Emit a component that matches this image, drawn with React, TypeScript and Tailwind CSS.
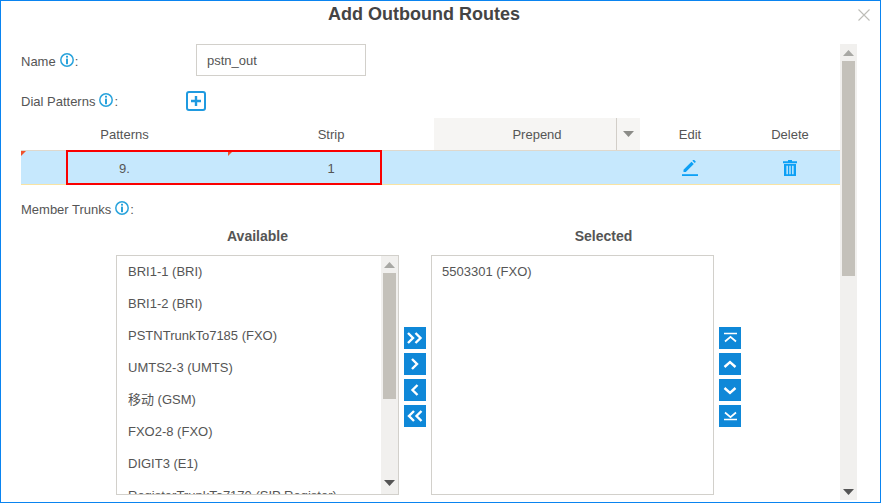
const availableTrunks = [
  'BRI1-1 (BRI)',
  'BRI1-2 (BRI)',
  'PSTNTrunkTo7185 (FXO)',
  'UMTS2-3 (UMTS)',
  '移动 (GSM)',
  'FXO2-8 (FXO)',
  'DIGIT3 (E1)',
  'RegisterTrunkTo7170 (SIP Register)',
];

const InfoIcon = () => (
  <svg width="14" height="14" viewBox="0 0 14 14" className="shrink-0">
    <circle cx="7" cy="7" r="6.2" fill="none" stroke="#29a3dc" strokeWidth="1.5" />
    <rect x="6" y="2.800" width="2" height="1.800" fill="#29a3dc" />
    <rect x="6" y="5.600" width="2" height="5.600" fill="#29a3dc" />
  </svg>
);

const Label = ({ text, className }: { text: string; className: string }) => (
  <div className={`flex items-center pt-[2px] ${className}`}>
    <span>{text}</span>
    <span className="mb-[4px] ml-[4px]">
      <InfoIcon />
    </span>
    <span className="ml-[1px]">:</span>
  </div>
);

const ArrowButton = ({ d, thin }: { d: string; thin?: boolean }) => (
  <button className="flex h-[22px] w-[22px] items-center justify-center bg-[#0f88d8]">
    <svg width="22" height="22" viewBox="0 0 22 22" fill="none" stroke="#fff" strokeWidth={thin ? 1.7 : 2.4}>
      <path d={d} />
    </svg>
  </button>
);

const Triangle = ({ className }: { className: string }) => (
  <div
    className={`absolute top-0 h-0 w-0 border-t-[5px] border-r-[5px] border-t-[#f0522b] border-r-transparent ${className}`}
  />
);

const ScrollUp = ({ color }: { color: string }) => (
  <svg width="11" height="6" viewBox="0 0 11 6">
    <path d="M5.500 0 11 6H0z" fill={color} />
  </svg>
);

const ScrollDown = () => (
  <svg width="11" height="6" viewBox="0 0 11 6">
    <path d="M0 0h11L5.500 6z" fill="#555" />
  </svg>
);

export default function App() {
  return (
    <div className="relative flex h-[503px] w-[881px] flex-col overflow-hidden border border-[#0a84f0] bg-white font-['Liberation_Sans','Noto_Sans_CJK_SC',sans-serif] text-[13px] text-[#555]">
      <div className="flex h-[43px] shrink-0 justify-center pt-[3px] pr-[33px]">
        <h1 className="text-[18px] leading-[20px] font-bold text-[#444]">Add Outbound Routes</h1>
      </div>
      <button className="absolute top-[8px] right-[10px]">
        <svg width="12" height="12" viewBox="0 0 12 12" stroke="#bdbdb8" strokeWidth="1.100" fill="none">
          <path d="M.5.5l11 11M11.5.5l-11 11" />
        </svg>
      </button>

      <div className="flex min-h-0 flex-1 pb-[1px]">
        <div className="relative ml-[20px] w-[819px] shrink-0 overflow-hidden">
          <div className="flex h-[32px] items-center">
            <Label text="Name" className="mt-[2px] w-[175px]" />
            <div className="flex h-[32px] w-[170px] items-center border border-[#d2d0cb] pt-[2px] pl-[10px]">pstn_out</div>
          </div>

          <div className="mt-[15px] flex h-[20px] items-center">
            <Label text="Dial Patterns" className="w-[165px]" />
            <button className="flex h-[20px] w-[20px] items-center justify-center rounded-[3px] border-2 border-[#1f9ae0]">
              <svg width="10" height="10" viewBox="0 0 10 10">
                <path d="M5 0v10M0 5h10" stroke="#1f9ae0" strokeWidth="2.400" />
              </svg>
            </button>
          </div>

          <div className="mt-[7px] grid h-[32px] grid-cols-[207px_206px_206px_100px_100px] items-center text-center">
            <div className="pt-[2px]">Patterns</div>
            <div className="pt-[2px]">Strip</div>
            <div className="relative flex h-full items-center justify-center bg-[#f6f5f3] pt-[2px]">
              Prepend
              <div className="absolute top-0 right-0 flex h-full w-[24px] items-center justify-center border-l border-[#d2cec8]">
                <svg width="11" height="6" viewBox="0 0 11 6">
                  <path d="M0 0h11L5.500 6z" fill="#8c8c88" />
                </svg>
              </div>
            </div>
            <div className="pt-[2px]">Edit</div>
            <div className="pt-[2px]">Delete</div>
          </div>

          <div className="relative grid h-[35px] grid-cols-[207px_206px_206px_100px_100px] items-center border-t border-b border-t-[#dfd8cc] border-b-[#f8e3a3] bg-[#c6e8fd] text-center">
            <div className="relative flex h-full items-center justify-center pt-[3px]">
              <Triangle className="left-0" />
              9.
            </div>
            <div className="relative flex h-full items-center justify-center pt-[3px]">
              <Triangle className="left-0" />1
            </div>
            <div />
            <div className="flex justify-center">
              <svg width="16" height="16" viewBox="0 0 16 16">
                <path d="M1.500 12v-2.300L9.500 1.700l2.300 2.300-8 8zM10.400.8l.8-.8c.3-.3.7-.3 1 0l1.300 1.300c.3.3.3.7 0 1l-.8.8z" fill="#0da0f5" />
                <rect x="0" y="14.200" width="16" height="1.800" fill="#0da0f5" />
              </svg>
            </div>
            <div className="flex justify-center">
              <svg width="14" height="16" viewBox="0 0 14 16" fill="#0da0f5">
                <path d="M5 0h4v1.200h5v2H0v-2h5z" />
                <path fillRule="evenodd" d="M1 4h12v12H1zM3.400 5.800v8.400h1.500V5.800zm2.900 0v8.400h1.400V5.800zm2.800 0v8.400h1.500V5.800z" />
              </svg>
            </div>
            <div className="absolute top-[-1px] left-[45px] h-[35px] w-[316px] border-2 border-[#fa0000]" />
          </div>

          <div className="mt-[14px] h-[20px]">
            <Label text="Member Trunks" className="h-[20px]" />
          </div>

          <div className="mt-[7px] flex h-[20px] text-[14px] leading-[20px] font-bold">
            <div className="ml-[95px] w-[283px] text-center">Available</div>
            <div className="ml-[63px] w-[283px] text-center">Selected</div>
          </div>

          <div className="mt-[9px] flex items-start">
            <div className="ml-[95px] flex h-[240px] w-[283px] shrink-0 border border-[#d2d0cb]">
              <ul className="h-full flex-1 overflow-hidden pl-[11px]">
                {availableTrunks.map((name) => (
                  <li key={name} className="flex h-[32px] items-center whitespace-nowrap">
                    {name}
                  </li>
                ))}
              </ul>
              <div className="flex w-[17px] flex-col items-center bg-[#f1f0ee]">
                <div className="flex h-[17px] items-center justify-center">
                  <ScrollUp color="#a8a8a4" />
                </div>
                <div className="h-[126px] w-[13px] bg-[#c4c1ba]" />
                <div className="flex-1" />
                <div className="flex h-[20px] items-center justify-center pb-[3px]">
                  <ScrollDown />
                </div>
              </div>
            </div>

            <div className="mt-[72px] ml-[5px] flex w-[22px] shrink-0 flex-col gap-[4px]">
              <ArrowButton d="M4 6 9 11 4 16M11.500 6 16.500 11 11.500 16" />
              <ArrowButton d="M8 6 13 11 8 16" />
              <ArrowButton d="M13.500 6 8.500 11 13.500 16" />
              <ArrowButton d="M10 6 5 11 10 16M17.500 6 12.500 11 17.500 16" />
            </div>

            <div className="ml-[5px] h-[240px] w-[283px] shrink-0 border border-[#d2d0cb] pl-[10px]">
              <div className="flex h-[32px] items-center">5503301 (FXO)</div>
            </div>

            <div className="mt-[72px] ml-[5px] flex w-[22px] shrink-0 flex-col gap-[4px]">
              <ArrowButton thin d="M5 6.500h13M6 14.500 11.500 9.800 17 14.500" />
              <ArrowButton d="M5.500 14 11 9 16.500 14" />
              <ArrowButton d="M5.500 9 11 14 16.500 9" />
              <ArrowButton thin d="M6 7.500 11.500 12.200 17 7.500M5 14.500h13" />
            </div>
          </div>
        </div>

        <div className="flex h-[456px] w-[17px] shrink-0 flex-col items-center bg-[#f1f0ee]">
          <div className="flex h-[17px] items-center justify-center">
            <ScrollUp color="#a8a8a4" />
          </div>
          <div className="h-[215px] w-[13px] bg-[#c4c1ba]" />
          <div className="flex-1" />
          <div className="flex h-[17px] items-center justify-center">
            <ScrollDown />
          </div>
        </div>
      </div>
    </div>
  );
}
